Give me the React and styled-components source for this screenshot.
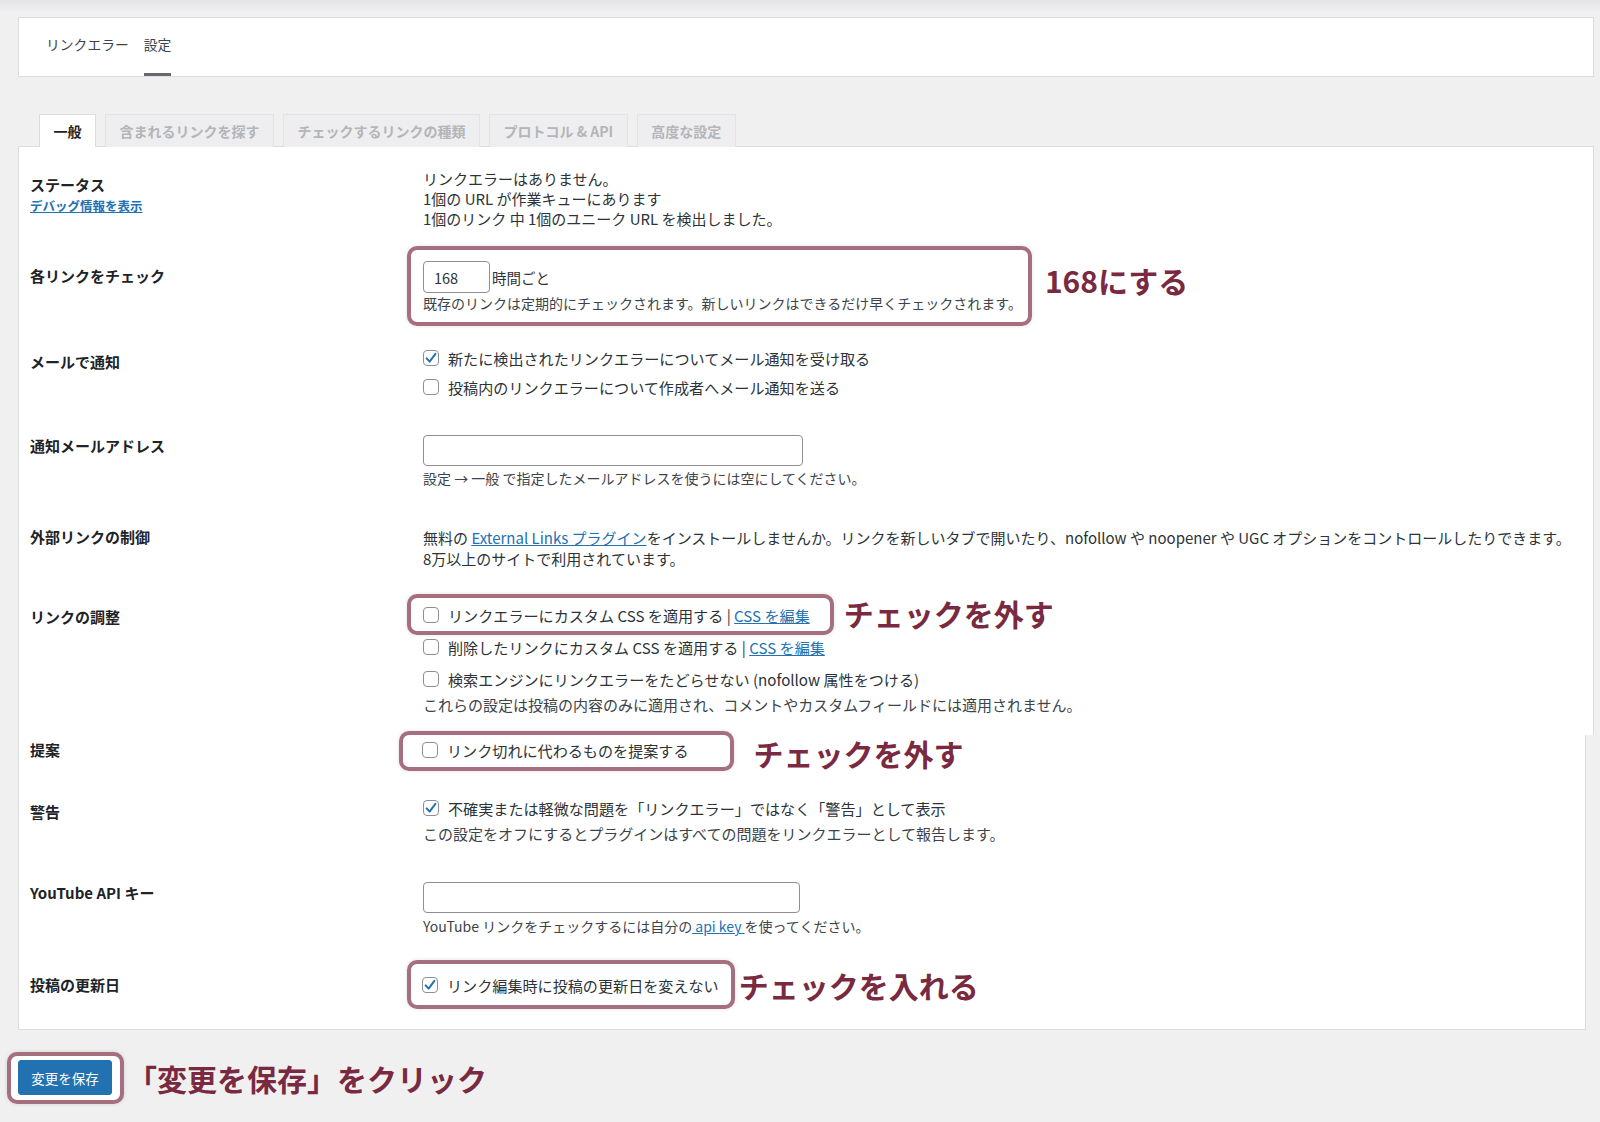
import React from 'react';
import styled, { createGlobalStyle } from 'styled-components';

const colors = {
  page: '#f0f0f1',
  border: '#dcdcde',
  text: '#1d2327',
  desc: '#3c434a',
  link: '#2271b1',
  mark: '#a66f7f',
  note: '#7a2a40',
};

const GlobalStyle = createGlobalStyle`
  body {
    margin: 0;
    background: ${colors.page};
    font-family: "Noto Sans CJK JP", "Noto Sans", sans-serif;
    color: ${colors.text};
  }
`;

const Page = styled.div`
  min-height: 1122px;
  box-sizing: border-box;
  padding: 17px 6px 0 18px;
  background: linear-gradient(#e3e3e5, ${colors.page} 12px) no-repeat;
`;

const NavBar = styled.nav`
  height: 58px;
  background: #fff;
  border: 1px solid ${colors.border};
  display: flex;
  gap: 15px;
  padding-left: 27px;
`;

const NavItem = styled.a`
  display: flex;
  align-items: center;
  padding-bottom: 4px;
  font-size: 13.8px;
  color: #3c434a;
  border-bottom: 3px solid ${p => (p.$active ? '#646970' : 'transparent')};
`;

const Tabs = styled.div`
  display: flex;
  gap: 9px;
  margin: 37px 0 0 21px;
`;

const Tab = styled.div`
  height: 33px;
  box-sizing: border-box;
  padding: 0 13.5px;
  display: flex;
  align-items: center;
  font-size: 14px;
  font-weight: 700;
  border: 1px solid ${p => (p.$active ? colors.border : '#e3e3e5')};
  border-bottom: none;
  background: ${p => (p.$active ? '#fff' : '#eeeef0')};
  color: ${p => (p.$active ? colors.text : '#b3b5b8')};
  position: relative;
  margin-bottom: -1px;
  z-index: 1;
`;

const Panel = styled.section`
  background: #fff;
  border: 1px solid ${colors.border};
  ${p =>
    p.$lower
      ? 'border-top: none; margin-right: 8px; padding-bottom: 20px;'
      : 'border-bottom: none; padding-bottom: 20px;'}
`;

const Row = styled.div`
  display: grid;
  grid-template-columns: 393px 1fr;
  align-items: start;
  padding: ${p => p.$pt}px 0 0 11px;
`;

const Label = styled.div`
  font-size: 15px;
  font-weight: 700;
  line-height: 20px;
  padding-top: ${p => p.$lo || 0}px;
  color: ${colors.text};
`;

const SmallLink = styled.a`
  display: block;
  margin-top: 1px;
  font-size: 12.5px;
  font-weight: 700;
  line-height: 20px;
  color: ${colors.link};
  text-decoration: underline;
`;

const Link = styled.a`
  color: ${colors.link};
  text-decoration: underline;
`;

const Text = styled.div`
  font-size: 15px;
  line-height: ${p => p.$lh || 20}px;
  color: #2c3338;
  white-space: nowrap;
`;

const Desc = styled.div`
  font-size: ${p => p.$size || 15}px;
  line-height: 20px;
  color: ${colors.desc};
  margin-top: ${p => p.$mt || 0}px;
  white-space: nowrap;
`;

const CheckLine = styled.label`
  display: flex;
  align-items: center;
  gap: 9px;
  height: 20px;
  font-size: 15.1px;
  color: #2c3338;
  margin-top: ${p => p.$mt || 0}px;
  white-space: nowrap;
`;

const Box = styled.span`
  width: 16px;
  height: 16px;
  box-sizing: border-box;
  flex: none;
  border: 1px solid #8c8f94;
  border-radius: 4px;
  background: #fff;
  display: inline-flex;
  align-items: center;
  justify-content: center;
`;

const Field = styled.input`
  width: ${p => p.$w}px;
  height: ${p => p.$h || 31}px;
  box-sizing: border-box;
  border: 1px solid #8c8f94;
  border-radius: 4px;
  padding: 0 10px;
  font-family: inherit;
  font-size: 14.5px;
  color: #2c3338;
  background: #fff;
  outline: none;
  display: block;
`;

const InlineRow = styled.div`
  display: flex;
  align-items: center;
  gap: 2px;
  font-size: 14.5px;
  color: #2c3338;
`;

const Annotated = styled.div`
  display: flex;
  align-items: ${p => p.$align || 'center'};
  gap: ${p => p.$gap}px;
`;

const Mark = styled.div`
  border: 4px solid ${colors.mark};
  border-radius: 10px;
  background: #fff;
  box-shadow: 0 0 4px rgba(0, 0, 0, 0.12);
  padding: ${p => p.$pad};
  margin-left: ${p => p.$ml}px;
  margin-top: ${p => p.$mt || 0}px;
  position: relative;
  z-index: 1;
`;

const Note = styled.div`
  font-size: 30px;
  line-height: 36px;
  font-weight: 700;
  color: ${colors.note};
  white-space: nowrap;
  margin-top: ${p => p.$mt || 0}px;
`;

const SaveRow = styled.div`
  display: flex;
  align-items: center;
  gap: 3px;
  margin: 22px 0 0 -11px;
`;

const SaveButton = styled.button`
  width: 94px;
  height: 35px;
  border: 1px solid #2271b1;
  border-radius: 3px;
  background: #2271b1;
  color: #fff;
  font-family: inherit;
  font-size: 13.5px;
  padding: 0;
  display: block;
`;

const Check = ({ checked, children, mt }) => (
  <CheckLine $mt={mt}>
    <Box>
      {checked && (
        <svg width="14" height="14" viewBox="0 0 14 14">
          <path d="M2.6 7.4 L5.6 10.6 L11.4 2.8" fill="none" stroke="#2271b1" strokeWidth="2" strokeLinecap="round" strokeLinejoin="round" />
        </svg>
      )}
    </Box>
    <span>{children}</span>
  </CheckLine>
);

const App = () => {
  return (
    <Page>
      <GlobalStyle />
      <NavBar>
        <NavItem>リンクエラー</NavItem>
        <NavItem $active>設定</NavItem>
      </NavBar>

      <Tabs>
        <Tab $active>一般</Tab>
        <Tab>含まれるリンクを探す</Tab>
        <Tab>チェックするリンクの種類</Tab>
        <Tab>プロトコル &amp; API</Tab>
        <Tab>高度な設定</Tab>
      </Tabs>

      <Panel>
        <Row $pt={22}>
          <Label $lo={6}>
            ステータス
            <SmallLink>デバッグ情報を表示</SmallLink>
          </Label>
          <div>
            <Text>リンクエラーはありません。</Text>
            <Text>1個の URL が作業キューにあります</Text>
            <Text>1個のリンク 中 1個のユニーク URL を検出しました。</Text>
          </div>
        </Row>

        <Row $pt={17}>
          <Label $lo={20}>各リンクをチェック</Label>
          <Annotated $gap={13} $align="flex-start">
            <Mark $ml={-16} $pad="11px 6px 9px 12px">
              <InlineRow>
                <Field $w={67} $h={32} defaultValue="168" />
                時間ごと
              </InlineRow>
              <Desc $size={14}>既存のリンクは定期的にチェックされます。新しいリンクはできるだけ早くチェックされます。</Desc>
            </Mark>
            <Note $mt={16}>168にする</Note>
          </Annotated>
        </Row>

        <Row $pt={22}>
          <Label $lo={4}>メールで通知</Label>
          <div>
            <Check checked>新たに検出されたリンクエラーについてメール通知を受け取る</Check>
            <Check mt={9}>投稿内のリンクエラーについて作成者へメール通知を送る</Check>
          </div>
        </Row>

        <Row $pt={38}>
          <Label $lo={1}>通知メールアドレス</Label>
          <div>
            <Field $w={380} />
            <Desc $size={14} $mt={2}>設定 → 一般 で指定したメールアドレスを使うには空にしてください。</Desc>
          </div>
        </Row>

        <Row $pt={39}>
          <Label>外部リンクの制御</Label>
          <div>
            <Text $lh={21}>
              無料の <Link>External Links プラグイン</Link>をインストールしませんか。リンクを新しいタブで開いたり、nofollow や noopener や UGC オプションをコントロールしたりできます。
            </Text>
            <Text $lh={21}>8万以上のサイトで利用されています。</Text>
          </div>
        </Row>

        <Row $pt={25}>
          <Label $lo={13}>リンクの調整</Label>
          <div>
            <Annotated $gap={10}>
              <Mark $ml={-16} $pad="7px 20px 6px 12px">
                <Check>
                  リンクエラーにカスタム CSS を適用する | <Link>CSS を編集</Link>
                </Check>
              </Mark>
              <Note $mt={-4}>チェックを外す</Note>
            </Annotated>
            <Check mt={2}>
              削除したリンクにカスタム CSS を適用する | <Link>CSS を編集</Link>
            </Check>
            <Check mt={12}>検索エンジンにリンクエラーをたどらせない (nofollow 属性をつける)</Check>
            <Desc $mt={6}>これらの設定は投稿の内容のみに適用され、コメントやカスタムフィールドには適用されません。</Desc>
          </div>
        </Row>
      </Panel>

      <Panel $lower>
        <Row $pt={0}>
          <Label $lo={5}>提案</Label>
          <Annotated $gap={20}>
            <Mark $ml={-24} $mt={-4} $pad="5px 41px 7px 19px">
              <Check>リンク切れに代わるものを提案する</Check>
            </Mark>
            <Note>チェックを外す</Note>
          </Annotated>
        </Row>

        <Row $pt={27}>
          <Label $lo={4}>警告</Label>
          <div>
            <Check checked>不確実または軽微な問題を「リンクエラー」ではなく「警告」として表示</Check>
            <Desc $mt={6}>この設定をオフにするとプラグインはすべての問題をリンクエラーとして報告します。</Desc>
          </div>
        </Row>

        <Row $pt={38}>
          <Label $lo={1}>YouTube API キー</Label>
          <div>
            <Field $w={377} />
            <Desc $size={14} $mt={3}>
              YouTube リンクをチェックするには自分の<Link> api key </Link>を使ってください。
            </Desc>
          </div>
        </Row>

        <Row $pt={24}>
          <Label $lo={15}>投稿の更新日</Label>
          <Annotated $gap={4}>
            <Mark $ml={-16} $pad="11px 12px 10px 11px">
              <Check checked>リンク編集時に投稿の更新日を変えない</Check>
            </Mark>
            <Note>チェックを入れる</Note>
          </Annotated>
        </Row>
      </Panel>

      <SaveRow>
        <Mark $ml={0} $pad="4px 8px 5px 7px">
          <SaveButton>変更を保存</SaveButton>
        </Mark>
        <Note>「変更を保存」をクリック</Note>
      </SaveRow>
    </Page>
  );
};

export default App;
